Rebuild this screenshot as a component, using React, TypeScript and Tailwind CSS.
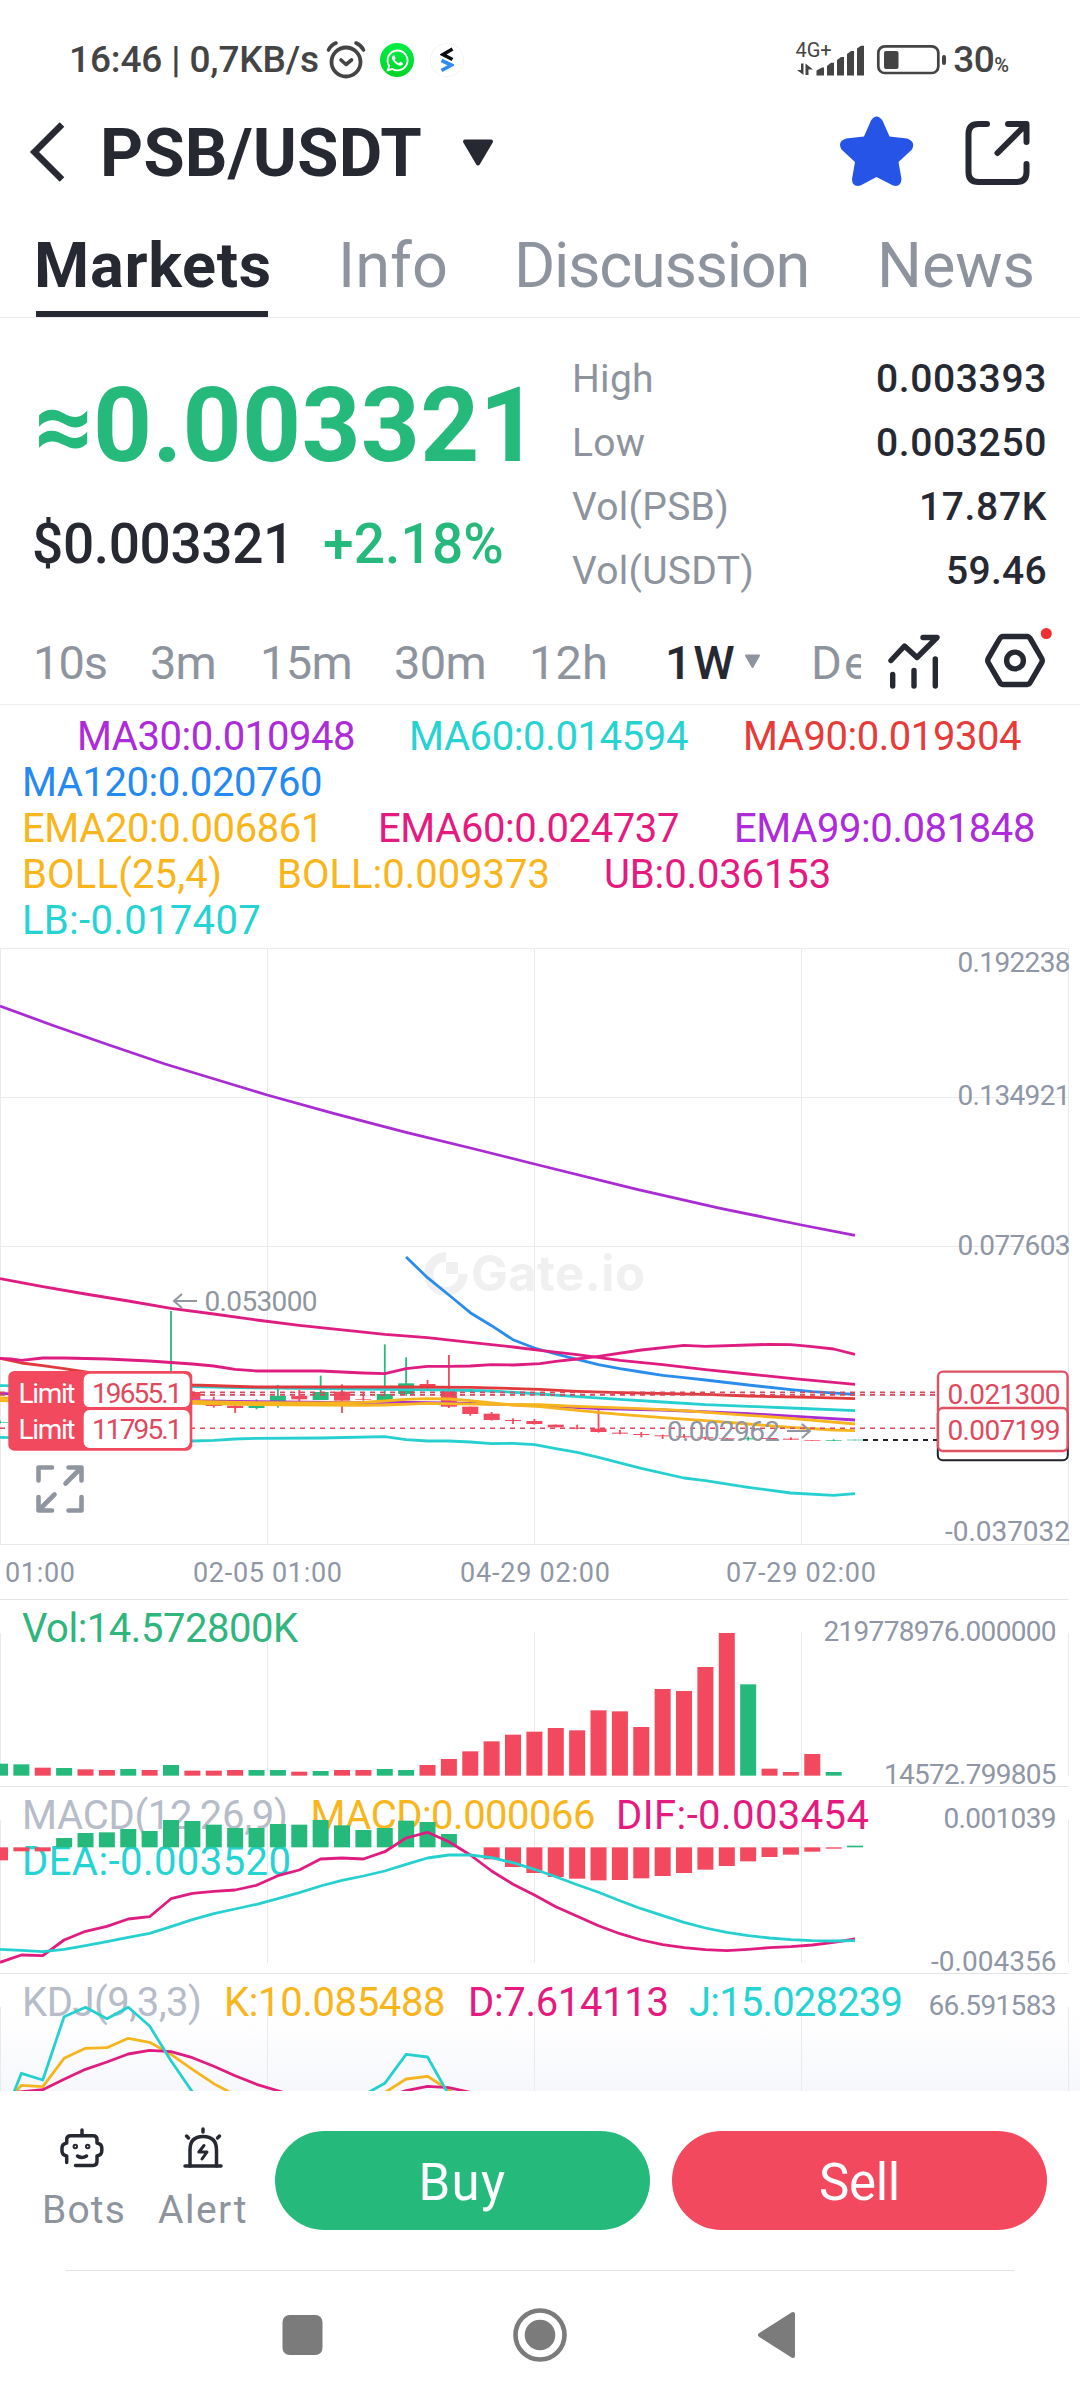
import { useLayoutEffect, useRef, useState, type ReactNode } from "react";
import { FaWhatsapp } from "react-icons/fa";

/* ---------- text that tracks itself to the width of its box ---------- */
function Fit({ className = "", children }: { className?: string; children: string }) {
  const box = useRef<HTMLSpanElement>(null);
  const inner = useRef<HTMLSpanElement>(null);
  const [tracking, setTracking] = useState(0);
  useLayoutEffect(() => {
    if (!box.current || !inner.current) return;
    inner.current.style.letterSpacing = "0px";
    const free = box.current.clientWidth - inner.current.getBoundingClientRect().width;
    setTracking(free / children.length);
  }, [children]);
  return (
    <span ref={box} className={"block shrink-0 whitespace-nowrap " + className}>
      <span ref={inner} style={{ letterSpacing: `${tracking}px` }}>
        {children}
      </span>
    </span>
  );
}

const GREEN = "#26b97c";
const RED = "#f2495e";
const PURPLE = "#a92bd3";
const TEAL = "#27d0d0";
const CRIMSON = "#e03a3c";
const BLUE = "#2a8cec";
const YELLOW = "#f6b51e";
const PINK = "#df1c80";
const GRID = "#e8eaee";

/* ---------- chart geometry ---------- */
const STEP = 21.376; // distance between two weekly candles
const BAR = 16;
type Pt = [number, number];

function toPoints(data: Pt[], base: number) {
  return data.map(([k, v]) => `${(k * STEP).toFixed(1)},${(base + v / 3).toFixed(1)}`).join(" ");
}

function Line({ data, base, color, width = 2.8 }: { data: Pt[]; base: number; color: string; width?: number }) {
  return <polyline points={toPoints(data, base)} fill="none" stroke={color} strokeWidth={width} strokeLinejoin="round" />;
}

function Label({ x, y, w, size = 28, fill = "#8f96a6", weight = 400, children }: {
  x: number; y: number; w: number; size?: number; fill?: string; weight?: number; children: string;
}) {
  return (
    <text x={x} y={y} fontSize={size} fill={fill} fontWeight={weight} textLength={w} lengthAdjust="spacing">
      {children}
    </text>
  );
}

function Verticals({ top, bottom }: { top: number; bottom: number }) {
  return (
    <g stroke={GRID} strokeWidth={1}>
      {[0.5, 267.5, 534.5, 801.5, 1068.5].map((x) => (
        <line key={x} x1={x} x2={x} y1={top} y2={bottom} />
      ))}
    </g>
  );
}

/* ---------- price chart series ---------- */
const P = 1230;
const ema99: Pt[] = [[0, -672], [2.42, -615], [5, -557], [7.72, -498], [12.5, -405], [15.6, -350], [19, -293], [22.2, -243], [25, -198], [29.8, -122], [33.7, -65], [37.5, -15], [40, 16]];
const ema60: Pt[] = [[0, 146], [1, 158], [2, 170], [4, 192], [6, 213], [8, 235], [10, 252], [12, 270], [14, 286], [18, 313], [20, 323], [22, 337], [24, 351], [25.26, 361], [27, 374], [29, 391], [31, 404], [33, 419], [35, 432], [37, 445], [38, 451], [40, 463]];
const upper: Pt[] = [[0, 385], [0.5, 387], [1, 391], [2, 384], [3, 384], [5, 387], [7, 393], [9, 402], [10, 408], [11, 418], [12, 423], [15, 423], [17, 429], [18, 431], [19, 416], [20, 409], [21, 409], [22, 408], [23, 404], [24, 405], [25.26, 401], [26, 394], [27, 387], [28, 379], [30, 360], [32, 346], [33, 349], [35, 345], [36, 343], [37, 344], [38, 350], [39, 357], [40, 373]];
const ma90: Pt[] = [[0, 385], [1, 399], [2, 407], [3, 416], [4, 426], [6, 445], [9, 465], [12, 471], [19, 471], [22, 472], [25.26, 478], [27, 484], [29, 488], [33, 493], [35, 498], [38, 502], [40, 506]];
const ma60: Pt[] = [[0, 467], [9, 470], [11, 473], [14, 475], [18, 478], [21, 480], [23, 483], [25.26, 492], [27, 500], [29, 508], [31, 516], [33, 524], [35, 529], [37, 534], [40, 542]];
const ma30: Pt[] = [[0, 490], [9, 512], [11, 514], [13, 516], [17, 518], [18, 516], [22, 520], [25.26, 527], [28, 536], [31, 540], [35, 551], [38, 562], [40, 570]];
const ema20: Pt[] = [[0, 504], [9, 514], [12, 518], [15, 519], [17, 517], [18, 513], [19, 508], [20, 506], [21, 507], [22, 512], [23, 519], [24, 525], [25.26, 530], [27, 541], [29, 553], [31, 563], [33, 572], [35, 582], [37, 592], [39, 600], [40, 602]];
const boll: Pt[] = [[0, 512], [9, 520], [12, 524], [15, 525], [17, 526], [18, 525], [20, 520], [23, 523], [25.26, 524], [27, 529], [30, 536], [32, 542], [35, 556], [37, 565], [40, 582]];
const ma120: Pt[] = [[19, 81], [20, 143], [21, 195], [22, 248], [23, 287], [24, 329], [25, 354], [26, 372], [27, 388], [28, 404], [29, 416], [30, 426], [31, 436], [32, 443], [33, 450], [35, 465], [37, 479], [38, 485], [40, 493]];
const lower: Pt[] = [[0, 622], [3, 626], [9, 633], [10, 631], [11, 627], [12, 625], [15, 624], [18, 620], [19, 629], [20, 633], [21, 633], [22, 636], [23, 641], [24, 640], [25, 644], [25.26, 647], [26, 656], [27, 667], [28, 682], [30, 715], [32, 744], [33, 752], [35, 772], [37, 789], [39, 796], [40, 791]];

/* index, body top, body bottom, wick top, wick bottom, rising */
const candles: [number, number, number, number, number, boolean][] = [
  [0, 576, 578, 572, 580, true],
  [8, 470, 500, 243, 510, true],
  [9, 486, 509, 484, 511, false],
  [10, 523, 528, 500, 533, false],
  [11, 527, 534, 510, 549, false],
  [12, 527, 534, 508, 538, true],
  [13, 498, 515, 465, 533, true],
  [14, 498, 508, 480, 515, false],
  [15, 486, 510, 437, 510, true],
  [16, 485, 512, 463, 549, false],
  [17, 508, 510, 488, 512, false],
  [18, 492, 510, 343, 510, true],
  [19, 460, 492, 382, 497, true],
  [20, 462, 471, 450, 483, false],
  [21, 478, 530, 375, 534, false],
  [22, 530, 552, 530, 557, false],
  [23, 551, 570, 546, 572, false],
  [24, 570, 573, 565, 582, false],
  [25, 573, 582, 567, 584, false],
  [26, 584, 592, 584, 592, false],
  [27, 593, 596, 584, 598, false],
  [28, 596, 606, 533, 608, false],
  [29, 608, 611, 600, 613, false],
  [30, 612, 615, 606, 622, false],
  [31, 616, 619, 614, 627, false],
  [32, 619, 622, 612, 624, false],
  [33, 622, 625, 620, 630, false],
  [34, 625, 627, 624, 628, false],
  [35, 625, 628, 620, 632, true],
  [36, 624, 627, 624, 627, false],
  [37, 626, 629, 622, 630, false],
  [38, 630, 632, 630, 632, false],
  [39, 630, 632, 628, 633, true],
  [40, 629, 631, 629, 631, true],
];

function PriceChart() {
  return (
    <svg className="block shrink-0 overflow-visible" width={1080} height={651} viewBox="0 948 1080 651">
      <Verticals top={948} bottom={1545} />
      <g stroke={GRID} strokeWidth={1}>
        {[948.5, 1097.5, 1246.5, 1395.5, 1544.5].map((y) => (
          <line key={y} x1={0} x2={1068.5} y1={y} y2={y} />
        ))}
      </g>

      {/* watermark */}
      <g fill="#f0f0f0">
        <path d="M446 1252 A21.8 21.8 0 1 0 467.8 1274 H458.5 A12.6 12.6 0 1 1 446 1261.8 Z" />
        <rect x={446} y={1262} width={12} height={12} />
        <text x={471} y={1291} fontSize={49} fontWeight={700} fontFamily="Inter" textLength={174} lengthAdjust="spacing">
          Gate.io
        </text>
      </g>

      {candles.map(([k, top, bottom, high, low, up]) => (
        <g key={k} fill={up ? GREEN : RED}>
          <rect x={k * STEP - BAR / 2} y={P + top / 3} width={BAR} height={(bottom - top) / 3} />
          <rect x={k * STEP - 0.9} y={P + high / 3} width={1.8} height={(low - high) / 3} />
        </g>
      ))}

      <Line data={ma30} base={P} color={PURPLE} />
      <Line data={ma60} base={P} color={TEAL} />
      <Line data={ma90} base={P} color={CRIMSON} />
      <Line data={ma120} base={P} color={BLUE} />
      <Line data={ema20} base={P} color={YELLOW} />
      <Line data={ema60} base={P} color={PINK} />
      <Line data={ema99} base={P} color={PURPLE} />
      <Line data={boll} base={P} color={YELLOW} />
      <Line data={upper} base={P} color={PINK} />
      <Line data={lower} base={P} color={TEAL} />

      {/* order levels */}
      <g stroke="#d8485c" strokeWidth={1.8} strokeDasharray="5 5">
        <line x1={0} x2={937} y1={1392.3} y2={1392.3} />
        <line x1={0} x2={937} y1={1394.8} y2={1394.8} />
        <line x1={0} x2={937} y1={1428.3} y2={1428.3} strokeWidth={1.4} />
      </g>
      <line x1={863} x2={937} y1={1440} y2={1440} stroke="#20222b" strokeWidth={2} strokeDasharray="5 5" />

      {/* high and low markers */}
      <path d="M182 1294 L174 1301 L182 1308 M174 1301 H197" fill="none" stroke="#8f96a0" strokeWidth={2} />
      <Label x={204.5} y={1310.7} w={113} fill="#8f96a0">0.053000</Label>
      <Label x={667} y={1440.7} w={113} fill="#8f96a0">0.002962</Label>
      <path d="M802 1424 L810 1431 L802 1438 M810 1431 H787" fill="none" stroke="#8f96a0" strokeWidth={2} />

      {/* level tags on the price axis */}
      <rect x={937.8} y={1409} width={130} height={51.3} rx={5} fill="#fff" stroke="#20222b" strokeWidth={2} />
      <rect x={938} y={1371.6} width={129.6} height={44} rx={5} fill="#fff" stroke="#df5163" strokeWidth={2.4} />
      <rect x={938} y={1408} width={129.6} height={43} rx={5} fill="#fff" stroke="#df5163" strokeWidth={2.4} />
      <Label x={947.5} y={1403.7} w={113} fill="#e0495d">0.021300</Label>
      <Label x={947.5} y={1439.7} w={113} fill="#e0495d">0.007199</Label>

      {/* open orders */}
      <rect x={8.3} y={1371} width={184} height={79.7} rx={6} fill={RED} />
      <rect x={83.7} y={1373.7} width={106} height={33.5} rx={6} fill="#fff" />
      <rect x={83.7} y={1410} width={106} height={38} rx={6} fill="#fff" />
      <line x1={84} x2={190} y1={1408.2} y2={1408.2} stroke={RED} strokeWidth={2.4} />
      <Label x={18.5} y={1403.2} w={57} fill="#fff">Limit</Label>
      <Label x={18.5} y={1439.2} w={57} fill="#fff">Limit</Label>
      <Label x={92} y={1403.2} w={90.5} fill="#e0495d">19655.1</Label>
      <Label x={92} y={1439.2} w={90.5} fill="#e0495d">11795.1</Label>

      {/* expand */}
      <g fill="none" stroke="#8f96a0" strokeWidth={4.6} strokeLinecap="round" strokeLinejoin="round">
        <path d="M38.5 1480.5 V1467.5 H52" />
        <path d="M68.5 1467.5 H81.5 V1480.5 M81 1468 L65.5 1483.5" />
        <path d="M38.5 1497 V1510.5 H52 M39 1510 L54.5 1494.5" />
        <path d="M81.5 1497 V1510.5 H68.5" />
      </g>

      <Label x={957.5} y={971.7} w={113}>0.192238</Label>
      <Label x={957.5} y={1104.7} w={113}>0.134921</Label>
      <Label x={957.5} y={1254.5} w={113}>0.077603</Label>
      <Label x={945} y={1541} w={125}>-0.037032</Label>

      <g>
        <Label x={5} y={1582} w={70} size={27}>01:00</Label>
        <Label x={193} y={1582} w={149} size={27}>02-05 01:00</Label>
        <Label x={460} y={1582} w={150} size={27}>04-29 02:00</Label>
        <Label x={726} y={1582} w={150} size={27}>07-29 02:00</Label>
      </g>
    </svg>
  );
}

/* ---------- volume ---------- */
const volume: [number, boolean][] = [
  [521, true], [523, true], [533, false], [534, true], [538, false], [540, false], [537, true], [540, false], [525, true], [542, false],
  [542, false], [540, false], [540, true], [540, true], [545, false], [543, true], [540, false], [540, false], [537, true], [540, true],
  [525, false], [507, false], [484, false], [454, false], [434, false], [425, false], [414, false], [421, false], [361, false], [364, false],
  [411, false], [297, false], [303, false], [231, false], [129, false], [283, true], [536, false], [546, false], [492, false], [546, true],
];

const B = 1590;

function VolumeChart() {
  return (
    <svg className="block shrink-0 overflow-visible" width={1080} height={187} viewBox="0 1599 1080 187">
      <line x1={0} x2={1068.5} y1={1599.5} y2={1599.5} stroke="#e3e4e7" />
      <Verticals top={1633} bottom={1776} />
      <Label x={22} y={1641.7} w={276} size={40} fill="#2fb57d">Vol:14.572800K</Label>
      {volume.map(([v, up], k) => (
        <rect key={k} x={k * STEP - BAR / 2} y={B + v / 3} width={BAR} height={(557 - v) / 3} fill={up ? GREEN : RED} />
      ))}
      <Label x={823.5} y={1641} w={233}>219778976.000000</Label>
      <Label x={884} y={1784} w={172.5}>14572.799805</Label>
    </svg>
  );
}

/* ---------- MACD ---------- */
const histogram = [
  811, 784, 784, 744, 729, 727, 717, 723, 690, 693, 704, 714, 714, 702, 704, 690, 706, 720, 714, 692, 696, 732, 772, 808, 831, 849,
  861, 866, 871, 870, 865, 858, 849, 839, 828, 814, 801, 794, 785, 776, 767,
];
const dif = [
  1117, 1095, 1097, 1050, 1024, 1009, 987, 980, 926, 910, 904, 900, 886, 857, 840, 807, 804, 807, 785, 744, 727, 755, 795, 843, 883,
  915, 950, 979, 1007, 1031, 1050, 1064, 1073, 1079, 1082, 1078, 1073, 1070, 1065, 1057, 1047,
];
const dea = [
  1078, 1081, 1085, 1078, 1067, 1055, 1042, 1030, 1010, 989, 971, 957, 943, 926, 908, 888, 871, 858, 843, 823, 804, 795, 795, 803, 818,
  838, 860, 884, 907, 932, 956, 977, 997, 1014, 1027, 1037, 1044, 1049, 1052, 1053, 1052,
];

function MacdChart() {
  return (
    <svg className="block shrink-0 overflow-visible" width={1080} height={187} viewBox="0 1786 1080 187">
      <line x1={0} x2={1068.5} y1={1786.5} y2={1786.5} stroke="#e3e4e7" />
      <Verticals top={1820} bottom={1963} />
      <Label x={22} y={1829} w={266} size={40} fill="#b6bcc8">MACD(12,26,9)</Label>
      <Label x={310.5} y={1829} w={285} size={40} fill="#f8b51c">MACD:0.000066</Label>
      <Label x={616} y={1829} w={253} size={40} fill="#e51a7f">DIF:-0.003454</Label>
      <Label x={22} y={1874.7} w={269} size={40} fill="#25d3d3">DEA:-0.003520</Label>
      {histogram.map((v, k) => (
        <rect
          key={k}
          x={k * STEP - BAR / 2}
          y={B + Math.min(v, 772) / 3}
          width={BAR}
          height={Math.abs(v - 772) / 3}
          fill={v < 772 ? GREEN : RED}
        />
      ))}
      <Line data={dif.map((v, k): Pt => [k, v])} base={B} color={PINK} />
      <Line data={dea.map((v, k): Pt => [k, v])} base={B} color={TEAL} />
      <Label x={943.5} y={1827.7} w={113}>0.001039</Label>
      <Label x={931} y={1971} w={125.5}>-0.004356</Label>
    </svg>
  );
}

/* ---------- KDJ ---------- */
const kdjJ: Pt[][] = [
  [[0.6, 1515], [1, 1450], [2, 1470], [3, 1280], [4, 1252], [5, 1286], [6, 1252], [7, 1308], [8, 1412], [9.1, 1515]],
  [[17.1, 1512], [18, 1480], [19, 1393], [20, 1401], [21, 1515]],
];
const kdjK: Pt[][] = [
  [[0.6, 1515], [1, 1486], [2, 1490], [3, 1405], [4, 1375], [5, 1373], [6, 1345], [7, 1357], [8, 1393], [9, 1438], [10, 1481], [11, 1515]],
  [[17.9, 1512], [19, 1467], [20, 1459], [21, 1500], [21.4, 1515]],
];
const kdjD: Pt[][] = [
  [[0.7, 1507], [2, 1499], [3, 1468], [4, 1438], [5, 1416], [6, 1392], [7, 1381], [8, 1385], [9, 1403], [10, 1429], [11, 1457], [12, 1483], [13.5, 1512]],
  [[18.5, 1512], [19, 1502], [20, 1489], [21, 1493], [22.2, 1510]],
];

function KdjChart() {
  return (
    <svg className="block shrink-0" width={1080} height={118} viewBox="0 1973 1080 118">
      <defs>
        <linearGradient id="fade" x1="0" y1="0" x2="0" y2="1">
          <stop offset="0.35" stopColor="#f6f7fb" stopOpacity={0} />
          <stop offset="1" stopColor="#f6f7fb" />
        </linearGradient>
      </defs>
      <rect x={0} y={1973} width={1080} height={118} fill="url(#fade)" />
      <line x1={0} x2={1068.5} y1={1973.5} y2={1973.5} stroke="#e3e4e7" />
      <Verticals top={2007} bottom={2091} />
      <Label x={22} y={2015.7} w={180} size={40} fill="#b6bcc8">KDJ(9,3,3)</Label>
      <Label x={224} y={2015.7} w={221.5} size={40} fill="#f8b51c">K:10.085488</Label>
      <Label x={468} y={2015.7} w={201} size={40} fill="#e51a7f">D:7.614113</Label>
      <Label x={689} y={2015.7} w={214} size={40} fill="#25d3d3">J:15.028239</Label>
      {kdjK.map((d, i) => <Line key={i} data={d} base={B} color={YELLOW} />)}
      {kdjD.map((d, i) => <Line key={i} data={d} base={B} color={PINK} />)}
      {kdjJ.map((d, i) => <Line key={i} data={d} base={B} color={TEAL} />)}
      <Label x={928.5} y={2015} w={128}>66.591583</Label>
    </svg>
  );
}

/* ---------- header ---------- */
function StatusBar() {
  return (
    <div className="flex h-[120px] shrink-0 items-center pr-[71px] pl-[69px] text-[#444]">
      <Fit className="w-[250px] text-[37px] font-medium">16:46 | 0,7KB/s</Fit>
      <svg className="ml-[7px]" width={40} height={40} viewBox="0 0 40 40" fill="none" stroke="#444" strokeLinecap="round">
        <circle cx={20} cy={22} r={14.5} strokeWidth={3.8} />
        <path d="M15 20 L20 24.500 L25.500 20" strokeWidth={3.6} strokeLinejoin="round" />
        <path d="M2.500 10 Q5 5 10 3 M37.500 10 Q35 5 30 3" strokeWidth={3.6} />
      </svg>
      <span className="ml-[14px] flex size-[34px] items-center justify-center rounded-full bg-linear-to-b from-[#00ee45] to-[#04d427]">
        <FaWhatsapp className="size-[25px] text-white" />
      </span>
      <span className="ml-[16px] flex size-[34px] items-center justify-center rounded-full border border-dotted border-gray-200">
        <svg width={14} height={26} viewBox="0 0 14 26" fill="none" strokeWidth={3.6}>
          <path d="M12.500 2 L3 7.500 L12.500 12.500" stroke="#0b0b12" />
          <path d="M1.500 13.500 L11.500 18 L1.500 23.500" stroke="#2f8cf0" />
        </svg>
      </span>

      <div className="ml-auto flex items-center">
        <svg className="overflow-visible" width={70} height={36} viewBox="795 41 70 36" fill="#444">
          <text x={794.5} y={56} fontSize={20} textLength={36} lengthAdjust="spacing">4G+</text>
          <path d="M802.500 62.500 V74 L796 69 H800 V62.500 Z M804.500 74 V62.500 L812 68.500 H807.500 V74 Z" />
          <path d="M815.500 74.500 V69.500 L821 66.500 H823 V74.500 Z" />
          <path d="M826 74.500 V65 L830 61.700 H833 V74.500 Z" />
          <path d="M836 74.500 V59 L840 56 H843 V74.500 Z" />
          <path d="M846 74.500 V53 L850 50 H853 V74.500 Z" />
          <path d="M856 74.500 V47.500 L860 44.700 H863 V74.500 Z" />
        </svg>
        <svg className="ml-[10px]" width={71} height={32} viewBox="876 43 71 32">
          <rect x={878.300} y={45.300} width={60} height={26.700} rx={6.500} fill="none" stroke="#444" strokeWidth={2.700} />
          <rect x={884} y={50} width={14.500} height={18} rx={2} fill="#444" />
          <rect x={942} y={54} width={4} height={10} rx={2} fill="#444" />
        </svg>
        <Fit className="ml-[6px] w-[41px] text-[37px] font-medium">30</Fit>
        <span className="mt-[9px] text-[20px] font-medium leading-6">%</span>
      </div>
    </div>
  );
}

function TitleBar() {
  return (
    <div className="flex h-[66px] shrink-0 items-center pl-[29px]">
      <svg className="mt-[-2px]" width={36} height={62} viewBox="0 0 36 62" fill="none" stroke="#262932" strokeWidth={6.500}>
        <path d="M33 3.500 L5.500 31 L33 58.500" />
      </svg>
      <Fit className="ml-[35px] w-[322px] text-[67px] leading-[66px] font-bold">PSB/USDT</Fit>
      <svg className="ml-[39px]" width={34} height={28} viewBox="0 0 34 28">
        <path d="M4 2.500 H30 L17 24.500 Z" fill="#262932" stroke="#262932" strokeWidth={4} strokeLinejoin="round" />
      </svg>
      <svg className="mt-[-3px] mr-[48px] ml-auto" width={195} height={76} viewBox="837 112 195 76">
        <path
          fill="#2554e6"
          d="M864 134.500 L871 118.500 Q876.500 110.500 882.500 118.500 L889.500 134.500 L907 136.500 Q916 139.500 912 147.500 L898.500 160 L901.500 177 Q901 185.500 893 183.500 L876.500 175 L860.500 183.500 Q852 185.500 852 177 L855 160 L841.500 147.500 Q837 139.500 846 136.500 Z"
        />
        <g fill="none" stroke="#262932" strokeWidth={6} strokeLinecap="round" strokeLinejoin="round">
          <path d="M987 122 H978.500 Q968.500 122 968.500 132 V170 Q968.500 180 978.500 180 H1016.500 Q1026.500 180 1026.500 170 V162" />
          <path d="M1008 122 H1026.500 V140 M1025 123.500 L997.500 151" />
        </g>
      </svg>
    </div>
  );
}

function Tabs() {
  return (
    <div className="flex h-[132px] shrink-0 items-start border-b border-[#ebecee] pt-[40px] pl-[36px] text-[63px] leading-[80px] text-[#8e949e]">
      <div className="w-[235px]">
        <Fit className="ml-[-2px] w-[238px] font-bold text-[#262932]">Markets</Fit>
        <div className="mt-[5px] h-[6px] w-[232px] bg-[#262932]" />
      </div>
      <Fit className="ml-[67px] w-[110px]">Info</Fit>
      <Fit className="ml-[66px] w-[295px]">Discussion</Fit>
      <Fit className="ml-[68px] w-[158px]">News</Fit>
    </div>
  );
}

function Stat({ label, children }: { label: string; children: ReactNode }) {
  return (
    <div className="flex h-16 items-center justify-between text-[39px] text-[#8e949e]">
      <span className="tracking-[0.3px]">{label}</span>
      {children}
    </div>
  );
}

function Summary() {
  return (
    <div className="flex h-[298px] shrink-0 items-start">
      <div className="w-[572px] pt-[48px] pl-[34px]">
        <div className="flex text-[103px] leading-[120px] font-bold text-[#26b97c]">
          <Fit className="w-[57px]">≈</Fit>
          <Fit className="ml-[2px] w-[446px]">0.003321</Fit>
        </div>
        <div className="mt-[26px] flex text-[55px] leading-[64px] font-medium text-[#262932]">
          <Fit className="ml-[-2px] w-[262px]">$0.003321</Fit>
          <Fit className="ml-[29px] w-[181px] text-[#26b97c]">+2.18%</Fit>
        </div>
      </div>
      <div className="w-[475px] pt-[29px]">
        <Stat label="High"><Fit className="w-[171px] font-medium text-[#262932]">0.003393</Fit></Stat>
        <Stat label="Low"><Fit className="w-[171px] font-medium text-[#262932]">0.003250</Fit></Stat>
        <Stat label="Vol(PSB)"><Fit className="w-[128px] font-medium text-[#262932]">17.87K</Fit></Stat>
        <Stat label="Vol(USDT)"><Fit className="w-[101px] font-medium text-[#262932]">59.46</Fit></Stat>
      </div>
    </div>
  );
}

function Intervals() {
  return (
    <div className="flex h-[89px] shrink-0 items-center border-b border-[#ebecee] pt-[5px] pl-[33px] text-[47px] leading-[60px] text-[#8e949e]">
      <div className="flex w-[828px] overflow-hidden">
        <Fit className="w-[74px]">10s</Fit>
        <Fit className="ml-[43px] w-[66px]">3m</Fit>
        <Fit className="ml-[44px] w-[92px]">15m</Fit>
        <Fit className="ml-[42px] w-[92px]">30m</Fit>
        <Fit className="ml-[43px] w-[79px]">12h</Fit>
        <Fit className="ml-[57px] w-[71px] font-medium text-[#262932]">1W</Fit>
        <svg className="mt-[21px] ml-[8px] shrink-0" width={17} height={15} viewBox="0 0 17 15">
          <path d="M2 1.500 H15 L8.500 13 Z" fill="#8e949e" stroke="#8e949e" strokeWidth={2} strokeLinejoin="round" />
        </svg>
        <Fit className="ml-[50px] w-[134px]">Depth</Fit>
      </div>
      <svg className="mt-[-11px]" width={200} height={66} viewBox="861 624 200 66" fill="none" stroke="#262932" strokeWidth={5.400} strokeLinecap="round" strokeLinejoin="round">
        <path d="M891 660.500 L904.500 646 L917 657.500 L937 637.500 H923" />
        <path d="M892.700 674.500 V686 M914 670.500 V686 M935.300 659 V686" />
        <path d="M1003 636.500 H1027 Q1029 636.500 1030.500 639 L1041.500 658 Q1043 660.500 1041.500 663 L1030.500 682 Q1029 684.500 1027 684.500 H1003 Q1001 684.500 999.500 682 L988.500 663 Q987 660.500 988.500 658 L999.500 639 Q1001 636.500 1003 636.500 Z" />
        <circle cx={1015} cy={660.500} r={8.400} />
        <circle cx={1046.300} cy={633.500} r={5.500} fill="#f03030" stroke="none" />
      </svg>
    </div>
  );
}

function Legend() {
  return (
    <div className="h-[243px] shrink-0 pt-[9px] pl-[22px] text-[40px] leading-[46px]">
      <div className="flex">
        <Fit className="ml-[55px] w-[278px] text-[#ad2bd9]">MA30:0.010948</Fit>
        <Fit className="ml-[54px] w-[279px] text-[#25d3d3]">MA60:0.014594</Fit>
        <Fit className="ml-[55px] w-[278px] text-[#e63b38]">MA90:0.019304</Fit>
      </div>
      <Fit className="w-[300px] text-[#2489f0]">MA120:0.020760</Fit>
      <div className="flex">
        <Fit className="w-[301px] text-[#f8b51c]">EMA20:0.006861</Fit>
        <Fit className="ml-[55px] w-[301px] text-[#e51a7f]">EMA60:0.024737</Fit>
        <Fit className="ml-[55px] w-[301px] text-[#ad2bd9]">EMA99:0.081848</Fit>
      </div>
      <div className="flex">
        <Fit className="w-[200px] text-[#f8b51c]">BOLL(25,4)</Fit>
        <Fit className="ml-[55px] w-[273px] text-[#f8b51c]">BOLL:0.009373</Fit>
        <Fit className="ml-[54px] w-[227px] text-[#e51a7f]">UB:0.036153</Fit>
      </div>
      <Fit className="w-[239px] text-[#25d3d3]">LB:-0.017407</Fit>
    </div>
  );
}

/* ---------- bottom ---------- */
function ActionBar() {
  return (
    <div className="flex h-[179px] shrink-0 items-start bg-white pl-[42px] text-[39px] leading-[48px] text-[#8e949e]">
      <div className="flex w-[84px] flex-col items-center pt-[34px]">
        <svg className="mr-[4px]" width={48} height={46} viewBox="58 2125 48 46" fill="none" stroke="#262932" strokeWidth={3.500} strokeLinecap="round" strokeLinejoin="round">
          <path d="M82 2130 V2135.500" />
          <path d="M66.700 2162.500 V2156 Q62 2155 62 2151 V2148 Q62 2144 66.700 2143 V2139.500 Q66.700 2135.700 70.700 2135.700 H93 Q97 2135.700 97 2139.500 V2143 Q101.800 2144 101.800 2148 V2151 Q101.800 2155 97 2156 V2161 Q97 2165.500 93 2165.500 H75.500" />
          <path d="M77.500 2156 Q81.800 2159 86.500 2156" />
          <circle cx={75.300} cy={2146.500} r={1} />
          <circle cx={87.700} cy={2146.500} r={1} />
        </svg>
        <Fit className="mt-[15px] w-[84px]">Bots</Fit>
      </div>
      <div className="ml-[32px] flex w-[90px] flex-col items-center pt-[34px]">
        <svg width={48} height={46} viewBox="179 2125 48 46" fill="none" stroke="#262932" strokeWidth={3.500} strokeLinecap="round" strokeLinejoin="round">
          <path d="M185 2166 H221" />
          <path d="M190 2166 V2150 Q190 2136.500 203 2136.500 Q216.500 2136.500 216.500 2150 V2166" />
          <path d="M203 2129 V2132 M186.500 2136 L188.500 2138 M219.500 2136 L217.500 2138" />
          <path d="M204 2145.500 L198.800 2152 H207 L202 2159" strokeWidth={3} />
        </svg>
        <Fit className="mt-[15px] w-[90px]">Alert</Fit>
      </div>
      <button className="mt-[40px] ml-[27px] flex h-[99px] w-[375px] items-center justify-center rounded-full bg-[#26b97c] pt-1 text-[51px] text-white">
        <Fit className="w-[88px]">Buy</Fit>
      </button>
      <button className="mt-[40px] ml-[22px] flex h-[99px] w-[375px] items-center justify-center rounded-full bg-[#f2495e] pt-1 text-[51px] text-white">
        <Fit className="w-[81px]">Sell</Fit>
      </button>
    </div>
  );
}

function NavBar() {
  return (
    <div className="mx-[66px] flex h-[130px] shrink-0 items-center justify-center border-t border-[#e0e0e0] pb-[2px]">
      <svg width={520} height={60} viewBox="280 2305 520 60" fill="#7b7b7b">
        <rect x={282.500} y={2315} width={40} height={40} rx={7} />
        <circle cx={540} cy={2335} r={24.500} fill="none" stroke="#7b7b7b" strokeWidth={4.600} />
        <circle cx={540} cy={2335} r={15.300} />
        <path d="M760 2335 L793 2314 V2356 Z" stroke="#7b7b7b" strokeWidth={4} strokeLinejoin="round" />
      </svg>
    </div>
  );
}

export default function App() {
  return (
    <main className="flex h-[2400px] w-[1080px] flex-col overflow-hidden bg-white font-[Roboto,sans-serif] text-[#262932]">
      <StatusBar />
      <TitleBar />
      <Tabs />
      <Summary />
      <Intervals />
      <Legend />
      <div className="flex h-[1143px] shrink-0 flex-col">
        <PriceChart />
        <VolumeChart />
        <MacdChart />
        <KdjChart />
      </div>
      <ActionBar />
      <NavBar />
    </main>
  );
}
